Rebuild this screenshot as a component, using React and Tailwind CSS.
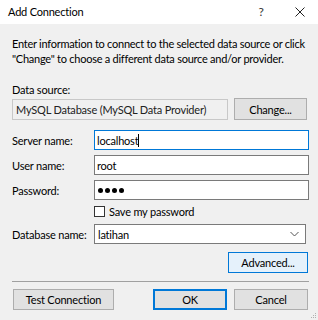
import React from "react";

const font = { fontFamily: 'Lato, "Segoe UI", sans-serif' };

function Field({ label, children }) {
  return (
    <div className="flex items-center h-[20px]">
      <span className="w-[82px] shrink-0 whitespace-nowrap">{label}</span>
      {children}
    </div>
  );
}

export default function App() {
  return (
    <div
      className="w-[318px] h-[320px] bg-[#f0f0f0] text-[11px] tracking-[-0.2px] text-black flex flex-col overflow-hidden relative"
      style={font}
    >
      {/* Title bar */}
      <div className="h-[24px] bg-white flex items-center pl-[8px] shrink-0">
        <span className="flex-1 text-[11px]">Add Connection</span>
        <span className="w-[14px] text-center text-[12px] text-[#333]">?</span>
        <svg width="10" height="10" viewBox="0 0 10 10" className="ml-[27px] mr-[13px]">
          <path d="M0.5 0.5L9.5 9.5M9.5 0.5L0.5 9.5" stroke="#222" strokeWidth="1" />
        </svg>
      </div>

      <div className="px-[12px] pr-[9px] flex flex-col leading-[15px]">
        <p className="mt-[12px] whitespace-nowrap tracking-[-0.25px]">
          Enter information to connect to the selected data source or click
          <br />
          "Change" to choose a different data source and/or provider.
        </p>

        <p className="mt-[16px]">Data source:</p>
        <div className="flex items-center gap-[6px] mt-[1px] h-[22px]">
          <div className="w-[216px] h-[21px] border border-[#c8c8c8] bg-[#f0f0f0] flex items-center px-[3px] text-[#222] whitespace-nowrap overflow-hidden">
            MySQL Database (MySQL Data Provider)
          </div>
          <button className="w-[73px] h-[22px] border border-[#adadad] bg-[#e1e1e1]">Change...</button>
        </div>

        <div className="flex flex-col gap-[5px] mt-[10px]">
          <Field label="Server name:">
            <div className="flex-1 h-[20px] border border-[#0078d7] bg-white flex items-center px-[2px]">
              localhost<span className="w-px h-[13px] bg-black" />
            </div>
          </Field>
          <Field label="User name:">
            <div className="flex-1 h-[20px] border border-[#7a7a7a] bg-white flex items-center px-[2px]">root</div>
          </Field>
          <Field label="Password:">
            <div className="flex-1 h-[20px] border border-[#7a7a7a] bg-white flex items-center px-[3px] gap-[2px]">
              {[0, 1, 2, 3].map((i) => (
                <span key={i} className="w-[5px] h-[5px] rounded-full bg-black" />
              ))}
            </div>
          </Field>
        </div>

        <label className="flex items-center ml-[82px] mt-[5px] h-[12px] gap-[4px]">
          <span className="w-[11px] h-[11px] border border-[#333] bg-white" />
          Save my password
        </label>

        <div className="mt-[7px]">
          <Field label="Database name:">
            <div className="w-[212px] h-[20px] border border-[#7a7a7a] bg-white flex items-center px-[3px]">
              <span className="flex-1">latihan</span>
              <svg width="9" height="6" viewBox="0 0 9 6" className="mr-[3px]">
                <path d="M0.5 1L4.5 5L8.5 1" stroke="#555" fill="none" strokeWidth="1" />
              </svg>
            </div>
          </Field>
        </div>

        <div className="flex justify-end mt-[8px] pr-[1px]">
          <button className="w-[80px] h-[21px] border border-[#0078d7] bg-[#e5f1fb]">Advanced...</button>
        </div>

        <div className="h-px bg-[#a0a0a0] mt-[8px]" />

        <div className="flex items-center mt-[7px] pr-[1px]">
          <button className="w-[101px] h-[21px] border border-[#adadad] bg-[#e1e1e1] ml-[1px]">Test Connection</button>
          <div className="flex-1" />
          <button className="w-[74px] h-[21px] border-2 border-[#0078d7] bg-[#e1e1e1]">OK</button>
          <button className="w-[74px] h-[21px] border border-[#adadad] bg-[#e1e1e1] ml-[7px]">Cancel</button>
        </div>
      </div>

      {/* resize grip */}
      <svg width="6" height="6" viewBox="0 0 6 6" className="absolute right-[1px] bottom-[1px]">
        <rect x="4" y="0" width="1" height="1" fill="#b0b0b0" />
        <rect x="2" y="2" width="1" height="1" fill="#b0b0b0" />
        <rect x="4" y="2" width="1" height="1" fill="#b0b0b0" />
        <rect x="0" y="4" width="1" height="1" fill="#b0b0b0" />
        <rect x="2" y="4" width="1" height="1" fill="#b0b0b0" />
        <rect x="4" y="4" width="1" height="1" fill="#b0b0b0" />
      </svg>
    </div>
  );
}
